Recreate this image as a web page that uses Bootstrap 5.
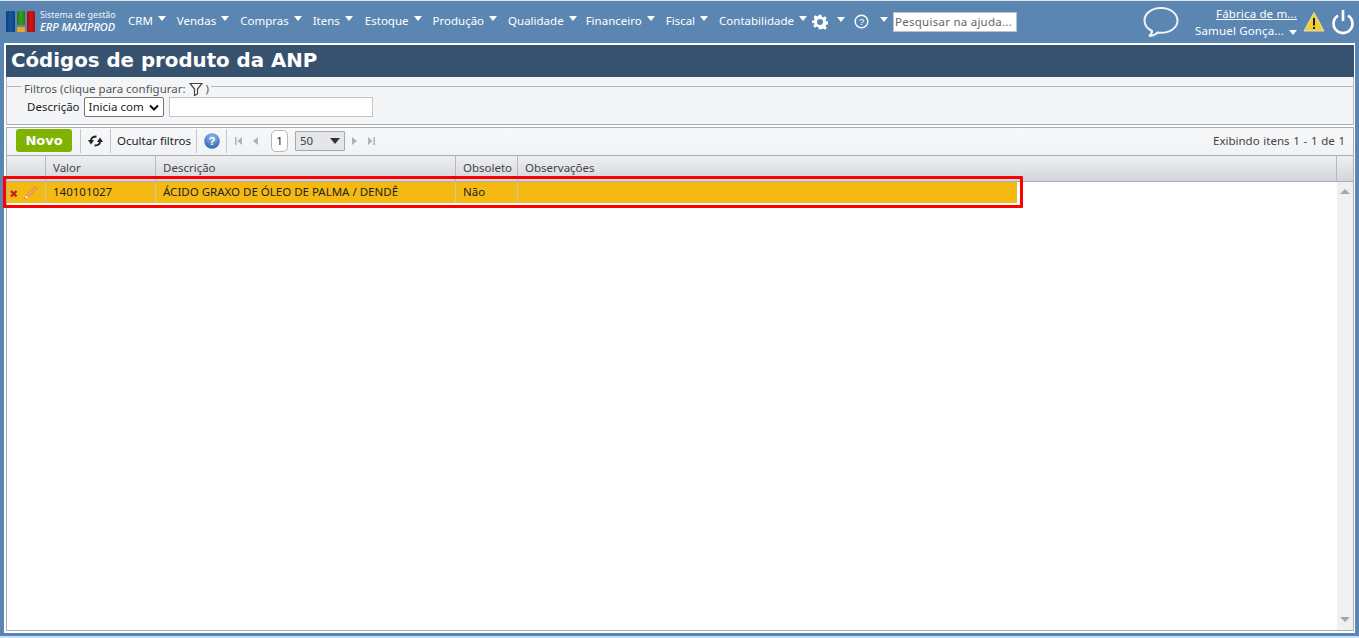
<!DOCTYPE html>
<html lang="pt"><head><meta charset="utf-8"><title>Códigos de produto da ANP</title>
<link href="https://cdn.jsdelivr.net/npm/bootstrap@5.3.0/dist/css/bootstrap.min.css" rel="stylesheet">
<style>
html,body{height:638px;overflow:hidden}
body{background:#5b86b2;font-family:"Noto Sans","DejaVu Sans",sans-serif;font-size:11.5px;color:#222;border-top:1px solid #dfe6ee;position:relative}
.topbar{height:41px;padding-left:6px;color:#fff}
.logo-txt{font-size:8.8px;line-height:12px;margin-left:4px;width:84px;color:#f2f5f9;margin-top:-2px}
.logo-txt i{font-size:11px;display:block;color:#fff;font-weight:500}
.menu{margin-left:4px}
.mitem{display:flex;align-items:center;color:#fff;font-size:11.5px;white-space:nowrap;margin-right:11px;padding-bottom:2px}
.mitem.estq{margin-right:11px;margin-left:1px}
.mitem.fin{margin-left:-2px}
.mitem.lastm{margin-right:5px}
.mitem::after,.caret-w{content:"";display:inline-block;border-left:4.5px solid transparent;border-right:4.5px solid transparent;border-top:5px solid #fff;margin-left:5px;margin-top:-5px}
.cgear{margin-left:9px;margin-right:9px}
.chelp{margin-left:11px;margin-right:0}
.helpsearch{width:124px;height:20px;border:1px solid #b8c4d0;background:#fff;color:#666;font-size:11.5px;letter-spacing:.25px;padding:0 1px;line-height:17px;margin-left:5px;white-space:nowrap;overflow:hidden}
.userbox{text-align:right;color:#fff;font-size:11.5px;line-height:17px;margin-right:6px;white-space:nowrap;letter-spacing:.15px}
.userbox u{display:block}
.chat{margin-right:15px}
.pwr{margin-left:6px;margin-right:4px}
.mainwrap{height:590px;margin:1px 4px 0 4px;background:#fff;padding:2px 1px 0 2px}
.titlebar{height:32px;background:#36526f;color:#fff;font-family:"DejaVu Sans",sans-serif;font-weight:700;font-size:19.8px;line-height:32px;padding-left:5px}
.filters{height:48px;background:#f4f5f6;border-bottom:1px solid #a9aeb4;border-left:1px solid #b5b9be;border-right:1px solid #b5b9be;padding-top:9px}
.fset{border-top:1px solid #b5b9be;height:11px;position:relative}
.flegend{color:#555;background:#f4f5f6;padding:0 2px;position:absolute;left:15px;top:-5px;display:flex;align-items:center;gap:3px;line-height:14px;white-space:nowrap}
.frow{padding-left:20px;gap:4px}
.finput-gap{margin-left:1px}
.fselect{width:80px;height:20px;border:1px solid #767676;border-radius:2px;background:#fff;font-size:11.5px;padding:0 4px;display:flex;align-items:center;justify-content:space-between;color:#222}
.finput{width:204px;height:20px;border:1px solid #c4c4c4;background:#fff}
.gridbox{height:504px;margin-top:2px;border:1px solid #a9aeb4;position:relative;display:flex;flex-direction:column}
.toolbar{height:28px;background:linear-gradient(#f7f8f9,#f0f2f4);border-bottom:1px solid #a9aeb4;padding-left:9px;flex:none;padding-bottom:2px}
.btnnovo{width:56px;height:23px;background:#7fb300;color:#fff;font-family:"DejaVu Sans",sans-serif;font-weight:700;font-size:13px;border-radius:3px;display:flex;align-items:center;justify-content:center}
.tsep{width:1px;height:24px;background:#c3c7cb}
.tcell{padding:0 5px 0 6px;color:#222}
.tcell.refresh{padding:0 7px;display:flex}
.qcell{padding:0 6px 0 7px;display:flex}
.pagebox{width:17px;height:22px;border:1px solid #b5b9be;border-radius:5px;background:#fff;display:flex;align-items:center;justify-content:center;color:#222;margin:0 7px 0 12px}
.sizebox{width:50px;height:20px;background:#e4e6e8;border:1px solid #a6a9ac;display:flex;justify-content:space-between;align-items:center;padding:0 4px;margin-right:6px;color:#444;border-radius:1px}
.pinfo{color:#444;word-spacing:.7px}
.thead-row{display:flex;height:26px;flex:none;background:linear-gradient(#eeeff1,#d3d6da);border-bottom:1px solid #a9aeb4;color:#444}
.hc,.dc{border-right:1px solid #b5b9be;padding-left:7px;padding-bottom:2px;display:flex;align-items:center;white-space:nowrap}
.w1{width:39px;padding-left:0}.w2{width:110px}.w3{width:300px}.w4{width:62px}.w5{width:819px}.w6{width:16px;padding:0;border-right:0}
.gridbody{flex:1;display:flex;min-height:0}
.gridmain{flex:1}
.drow{display:flex;height:21px;width:1010px;background:#f5b914;color:#222}
.dc{border-right:1px solid #cfc8a8}
.dc.w1{padding-left:3px;padding-bottom:0}
.drow .w5{width:489px;border-right:0}
.scrollcol{width:16px;background:#f0f0f0;display:flex;flex-direction:column;justify-content:space-between;align-items:center;padding:7px 0 8px}
.au{border-left:5px solid transparent;border-right:5px solid transparent;border-bottom:5px solid #a6a6a6}
.ad{border-left:5px solid transparent;border-right:5px solid transparent;border-top:5px solid #a6a6a6}
.redframe{position:absolute;left:-4px;top:48px;width:1020px;height:32px;border:3px solid #f00;border-radius:1px;pointer-events:none}
.foot{position:absolute;left:0;right:0;bottom:0;height:2px;background:#c2e3f5}
</style></head><body>
<div class="topbar d-flex align-items-center">
 <svg width="30" height="22" viewBox="0 0 30 22"><defs><linearGradient id="lb" x1="0" x2="1" y1="0" y2="0"><stop offset="0" stop-color="#0b3f80"/><stop offset=".5" stop-color="#15589f"/><stop offset="1" stop-color="#0b3f80"/></linearGradient><linearGradient id="lr" x1="0" x2="1" y1="0" y2="0"><stop offset="0" stop-color="#a80f0f"/><stop offset=".5" stop-color="#d41414"/><stop offset="1" stop-color="#a80f0f"/></linearGradient><linearGradient id="lg" x1="0" x2="1" y1="0" y2="0"><stop offset="0" stop-color="#247a14"/><stop offset=".5" stop-color="#3c9c22"/><stop offset="1" stop-color="#247a14"/></linearGradient></defs><rect x="0" y="0" width="9" height="21" rx="1.5" fill="url(#lb)"/><rect x="11" y="0" width="8" height="14" rx="1" fill="url(#lg)"/><rect x="11" y="16" width="8" height="5" rx="1" fill="#eaa91c"/><rect x="21" y="0" width="8" height="21" rx="1.5" fill="url(#lr)"/></svg>
 <div class="logo-txt">Sistema de gestão<i>ERP MAXIPROD</i></div>
 <div class="menu d-flex align-items-center flex-grow-1">
  <span class="mitem">CRM</span><span class="mitem">Vendas</span><span class="mitem">Compras</span><span class="mitem">Itens</span><span class="mitem estq">Estoque</span><span class="mitem">Produção</span><span class="mitem">Qualidade</span><span class="mitem fin">Financeiro</span><span class="mitem">Fiscal</span><span class="mitem lastm">Contabilidade</span>
  <svg width="16" height="16" viewBox="0 0 24 24"><path fill="#fff" fill-rule="evenodd" d="M10 1h4l.6 3.2 2 .9 2.8-1.8 2.8 2.8-1.8 2.8.9 2 3.2.6v4l-3.2.6-.9 2 1.800 2.800-2.800 2.800-2.800-1.800-2 .9L14 23h-4l-.6-3.200-2-.9-2.800 1.800-2.800-2.800 1.800-2.800-.9-2L0 14v-4l3.200-.6.9-2L2.300 4.600l2.800-2.800 2.800 1.800 2-.9zM12 7.500a4.500 4.500 0 1 0 0 9 4.500 4.500 0 0 0 0-9z"/></svg>
  <span class="caret-w cgear"></span>
  <svg width="15" height="15" viewBox="0 0 16 16"><circle cx="8" cy="8" r="6.700" fill="none" stroke="#fff" stroke-width="1.500"/><text x="8" y="11.500" font-size="10" text-anchor="middle" fill="#fff" font-family="Liberation Sans">?</text></svg>
  <span class="caret-w chelp"></span>
  <div class="helpsearch">Pesquisar na ajuda...</div>
 </div>
 <svg class="chat" width="38" height="34" viewBox="0 0 38 34"><path d="M19 3C9.500 3 2.500 8.500 2.500 15.500c0 5 3.500 8.500 7.500 10.500 0 2-1 4-3 5 3.500 0 6.500-1.500 8.500-3.500 1.300.2 2.500.3 3.500.3 9.500 0 16.500-5.500 16.500-12.300S28.500 3 19 3z" fill="none" stroke="#eef3f8" stroke-width="2"/></svg>
 <div class="userbox"><u>Fábrica de m...</u><span>Samuel Gonça...</span><span class="caret-w"></span></div>
 <svg width="22" height="22" viewBox="0 0 22 22"><path d="M11 1.500 21 20H1z" fill="#f3cf2e" stroke="#e4e0c8"/><rect x="10" y="7" width="2" height="7.500" fill="#222"/><rect x="10" y="16" width="2" height="2" fill="#222"/></svg>
 <svg class="pwr" width="24" height="26" viewBox="0 0 24 26"><path d="M7 6.500a9.500 9.500 0 1 0 10 0" fill="none" stroke="#fff" stroke-width="2.600"/><rect x="10.700" y="1" width="2.600" height="11" fill="#fff"/></svg>
</div>
<div class="mainwrap">
 <div class="titlebar">Códigos de produto da ANP</div>
 <div class="filters">
  <div class="fset"><div class="flegend">Filtros (clique para configurar: <svg width="14" height="14" viewBox="0 0 14 14"><path d="M1 1.500h12L8.500 7v5l-3 1.500V7z" fill="none" stroke="#444" stroke-width="1.200"/></svg>)</div></div>
  <div class="frow d-flex align-items-center"><span>Descrição</span><div class="fselect"><span>Inicia com</span><svg width="10" height="7" viewBox="0 0 10 7"><path d="M1 1.500 5 5.500 9 1.500" fill="none" stroke="#111" stroke-width="2"/></svg></div><div class="finput finput-gap"></div></div>
 </div>
 <div class="gridbox">
  <div class="toolbar d-flex align-items-center">
   <div class="btnnovo me-2">Novo</div><div class="tsep"></div>
   <div class="tcell refresh"><svg width="15" height="12" viewBox="0 0 15 12"><path d="M3 5.500C3 2.500 5 1.500 8.500 1.500M12 6.500c0 3-2 4-5.500 4" fill="none" stroke="#222" stroke-width="1.800"/><path d="M0 5h6L3 9.500zM9 7h6l-3-4.500z" fill="#222"/></svg></div><div class="tsep"></div>
   <div class="tcell">Ocultar filtros</div><div class="tsep"></div>
   <div class="qcell"><svg width="16" height="16" viewBox="0 0 16 16"><defs><radialGradient id="g" cx=".5" cy=".25" r=".8"><stop offset="0" stop-color="#8fb8ea"/><stop offset="1" stop-color="#2a62b4"/></radialGradient></defs><circle cx="8" cy="8" r="7.800" fill="url(#g)"/><text x="8" y="12" font-size="11.500" font-weight="700" text-anchor="middle" fill="#fff" font-family="Liberation Sans">?</text></svg></div><div class="tsep"></div>
   <svg class="ms-2" width="24" height="10" viewBox="0 0 24 10"><path d="M0 1h1.500v8H0zM7 1v8L2.500 5zM23 1v8l-5-4z" fill="#aeb2b6"/></svg>
   <div class="pagebox">1</div>
   <div class="sizebox"><span>50</span><svg width="10" height="6" viewBox="0 0 10 6"><path d="M0 0h10L5 6z" fill="#333"/></svg></div>
   <svg width="26" height="10" viewBox="0 0 26 10"><path d="M1 1v8l5-4zM17 1v8l4.500-4zM22.500 1H24v8h-1.500z" fill="#aeb2b6"/></svg>
   <div class="ms-auto me-2 pinfo">Exibindo itens 1 - 1 de 1</div>
  </div>
  <div class="thead-row"><div class="hc w1"></div><div class="hc w2">Valor</div><div class="hc w3">Descrição</div><div class="hc w4">Obsoleto</div><div class="hc w5">Observações</div><div class="hc w6"></div></div>
  <div class="gridbody">
   <div class="gridmain"><div class="drow">
    <div class="dc w1"><svg width="28" height="15" viewBox="0 0 28 15"><path d="M1 6l5.500 5.500M6.500 6 1 11.500" stroke="#c02020" stroke-width="2.300"/><path d="M15 13l1.500-3.500L25 1l2.300 2.300-8.500 8.500z" fill="#f0a458" stroke="#d98a3a" stroke-width=".8"/><path d="M14.500 14l1.500-3.500 2 2z" fill="#fff"/><path d="M14.500 14l.7-1.500.8.800z" fill="#333"/></svg></div>
    <div class="dc w2">140101027</div><div class="dc w3">ÁCIDO GRAXO DE ÓLEO DE PALMA / DENDÊ</div><div class="dc w4">Não</div><div class="dc w5"></div></div></div>
   <div class="scrollcol"><div class="au"></div><div class="ad"></div></div>
  </div>
  <div class="redframe"></div>
 </div>
</div>
<div class="foot"></div>
</body></html>
